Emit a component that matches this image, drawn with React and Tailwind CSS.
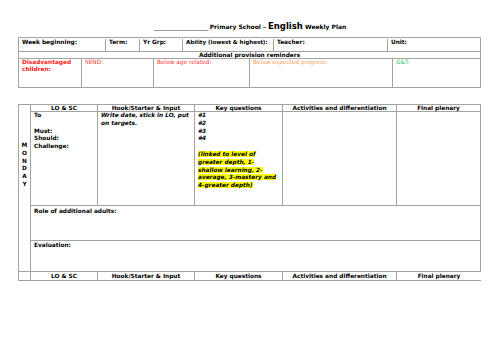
import React from 'react';

const line = 'border-[#a3a3a3]';

const TopCell = ({ w, first, children, className = '' }) => (
  <div className={`${w} shrink-0 h-full px-[3px] overflow-hidden ${first ? '' : `border-l ${line}`} ${className}`}>{children}</div>
);

const heads = ['LO & SC', 'Hook/Starter & Input', 'Key questions', 'Activities and differentiation', 'Final plenary'];

export default function App() {
  return (
    <div className="w-[500px] h-[354px] bg-white text-black font-['DejaVu_Sans',sans-serif] text-[5.8px] leading-[7px] font-bold">
      {/* Title */}
      <div className="pt-[21px] h-[37px] text-center text-[6px] leading-[10px] whitespace-nowrap">
        <span className="font-normal">__________________</span> Primary School – <span className="text-[8.5px]">English</span> Weekly Plan
      </div>

      {/* Top info table */}
      <div className={`ml-[18px] w-[463px] border ${line}`}>
        <div className="flex h-[13px] pt-[1px] whitespace-nowrap">
          <TopCell w="w-[86px]" first>Week beginning:</TopCell>
          <TopCell w="w-[34px]">Term:</TopCell>
          <TopCell w="w-[43px]">Yr Grp:</TopCell>
          <TopCell w="w-[91px]" className="text-[5.5px]">Ability (lowest &amp; highest):</TopCell>
          <TopCell w="w-[114px]">Teacher:</TopCell>
          <TopCell w="w-[93px]">Unit:</TopCell>
        </div>
        <div className={`h-[7px] border-t ${line} text-center leading-[6px]`}>Additional provision reminders</div>
        <div className={`flex h-[29px] border-t ${line}`}>
          <TopCell w="w-[62px]" first className="text-[#ff1a1a]">Disadvantaged<br />children:</TopCell>
          <TopCell w="w-[72px]" className="font-normal text-[#ff3b3b]">SEND:</TopCell>
          <TopCell w="w-[96px]" className="font-normal text-[#ff3b3b]">Below age related:</TopCell>
          <TopCell w="w-[143px]" className="font-normal text-[#f7a35c]">Below expected progress:</TopCell>
          <TopCell w="w-[88px]" className="font-normal text-[#22c55e]">G&amp;T:</TopCell>
        </div>
      </div>

      {/* Weekly plan table */}
      <div className="mt-[16px] ml-[18px] w-[463px] grid grid-cols-[11px_66px_96px_87px_113px_83px] grid-rows-[6px_93px_34px_30px] gap-px p-px bg-[#a3a3a3]">
        <div className="row-span-4 bg-white pt-[37px] flex flex-col items-center leading-[7.8px]">
          {['M', 'O', 'N', 'D', 'A', 'Y'].map((l) => (
            <span key={l}>{l}</span>
          ))}
        </div>
        {heads.map((h) => (
          <div key={h} className="bg-white text-center leading-[6px] whitespace-nowrap">{h}</div>
        ))}

        <div className="bg-white px-[3px] leading-[7.8px]">
          <div className="font-semibold">To</div>
          <div>&nbsp;</div>
          <div>Must:</div>
          <div>Should:</div>
          <div>Challenge:</div>
        </div>
        <div className="bg-white px-[3px] leading-[7.8px] italic">Write date, stick in LO, put on targets.</div>
        <div className="bg-white px-[3px] leading-[7.8px] italic">
          <div>#1</div>
          <div>#2</div>
          <div>#3</div>
          <div>#4</div>
          <div>&nbsp;</div>
          <div className="w-[81px]">
            <span className="bg-[#ffff00]">(linked to level of greater depth, 1-shallow learning, 2-average, 3-mastery and 4-greater depth)</span>
          </div>
        </div>
        <div className="bg-white" />
        <div className="bg-white" />

        <div className="col-span-5 bg-white px-[3px] pt-[2px]">Role of additional adults:</div>
        <div className="col-span-5 bg-white px-[3px] pt-[1px]">Evaluation:</div>
      </div>

      {/* Repeated footer header */}
      <div className={`ml-[18px] w-[463px] flex h-[9px] border-b ${line} leading-[9px] text-center whitespace-nowrap`}>
        <div className={`w-[12px] border-l ${line}`} />
        <div className={`w-[67px] border-l ${line}`}>LO &amp; SC</div>
        <div className={`w-[97px] border-l ${line}`}>Hook/Starter &amp; Input</div>
        <div className={`w-[88px] border-l ${line}`}>Key questions</div>
        <div className={`w-[114px] border-l ${line}`}>Activities and differentiation</div>
        <div className={`w-[85px] border-l ${line}`}>Final plenary</div>
      </div>
    </div>
  );
}
